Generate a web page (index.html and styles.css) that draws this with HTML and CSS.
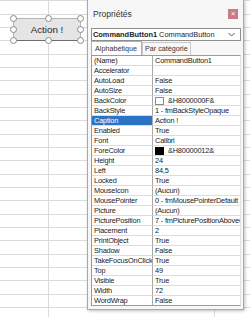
FILE: index.html
```html
<!DOCTYPE html>
<html lang="fr">
<head>
  <meta charset="UTF-8" />
  <meta name="viewport" content="width=device-width, initial-scale=1.0" />
  <title>Propriétés</title>
  <link rel="stylesheet" href="styles.css">
</head>
<body>
  <div class="sheet">
    <div class="cmd-button">
      <span class="cmd-label">Action !</span>
      <span class="handle h-tl"></span>
      <span class="handle h-tm"></span>
      <span class="handle h-tr"></span>
      <span class="handle h-ml"></span>
      <span class="handle h-mr"></span>
      <span class="handle h-bl"></span>
      <span class="handle h-bm"></span>
      <span class="handle h-br"></span>
    </div>

    <div class="props">
      <div class="props-title">
        <span>Propriétés</span>
        <span class="close">×</span>
      </div>
      <div class="combo">
        <span><b>CommandButton1</b> CommandButton</span>
        <svg class="chev" width="7" height="5" viewBox="0 0 7 5"><path d="M0.5 1 L3.5 4 L6.5 1" fill="none" stroke="#555" stroke-width="1"/></svg>
      </div>
      <div class="tabs">
        <span class="tab active">Alphabétique</span>
        <span class="tab">Par catégorie</span>
      </div>
      <div class="grid">
        <div class="k">(Name)</div><div class="v">CommandButton1</div>
        <div class="k">Accelerator</div><div class="v"></div>
        <div class="k">AutoLoad</div><div class="v">False</div>
        <div class="k">AutoSize</div><div class="v">False</div>
        <div class="k">BackColor</div><div class="v"><i class="swatch"></i>&amp;H8000000F&amp;</div>
        <div class="k">BackStyle</div><div class="v">1 - fmBackStyleOpaque</div>
        <div class="k sel">Caption</div><div class="v">Action !</div>
        <div class="k">Enabled</div><div class="v">True</div>
        <div class="k">Font</div><div class="v">Calibri</div>
        <div class="k">ForeColor</div><div class="v"><i class="swatch dark"></i>&amp;H80000012&amp;</div>
        <div class="k">Height</div><div class="v">24</div>
        <div class="k">Left</div><div class="v">84,5</div>
        <div class="k">Locked</div><div class="v">True</div>
        <div class="k">MouseIcon</div><div class="v">(Aucun)</div>
        <div class="k">MousePointer</div><div class="v">0 - fmMousePointerDefault</div>
        <div class="k">Picture</div><div class="v">(Aucun)</div>
        <div class="k">PicturePosition</div><div class="v">7 - fmPicturePositionAboveCenter</div>
        <div class="k">Placement</div><div class="v">2</div>
        <div class="k">PrintObject</div><div class="v">True</div>
        <div class="k">Shadow</div><div class="v">False</div>
        <div class="k">TakeFocusOnClick</div><div class="v">True</div>
        <div class="k">Top</div><div class="v">49</div>
        <div class="k">Visible</div><div class="v">True</div>
        <div class="k">Width</div><div class="v">72</div>
        <div class="k">WordWrap</div><div class="v">False</div>
      </div>
    </div>
  </div>
</body>
</html>
```

FILE: styles.css
```css
body {
  margin: 0;
  font-family: "Liberation Sans", Arial, sans-serif;
  color: #222;
}
.sheet {
  position: relative;
  width: 250px;
  height: 317px;
  overflow: hidden;
  background-color: #fff;
  background-image:
    linear-gradient(to right, transparent 48px, #dadada 48px, #dadada 49px, transparent 49px),
    linear-gradient(to right, transparent 214px, #dadada 214px, #dadada 215px, transparent 215px),
    repeating-linear-gradient(to bottom, transparent 0, transparent 0.33px, #dadada 0.33px, #dadada 1.33px, transparent 1.33px, transparent 13.33px);
}

/* ActiveX button on the sheet */
.cmd-button {
  position: absolute;
  left: 13px;
  top: 18px;
  width: 68px;
  height: 23px;
  box-sizing: border-box;
  background: #e5e5e5;
  border: 1px solid #b4b4b4;
  border-bottom-color: #6e6e6e;
  display: flex;
  align-items: center;
  justify-content: center;
}
.cmd-label {
  font-size: 9.8px;
  color: #262626;
}
.handle {
  position: absolute;
  width: 5px;
  height: 5px;
  border: 1px solid #8c8c8c;
  border-radius: 50%;
  background: #fff;
}
.h-tl, .h-ml, .h-bl { left: -4px; }
.h-tm, .h-bm { left: 31px; }
.h-tr, .h-mr, .h-br { right: -4px; }
.h-tl, .h-tm, .h-tr { top: -4px; }
.h-ml, .h-mr { top: 7px; }
.h-bl, .h-bm, .h-br { bottom: -4px; }

/* properties window */
.props {
  position: absolute;
  left: 87px;
  top: 0;
  width: 157px;
  height: 310px;
  box-sizing: border-box;
  background: #f7f7f7;
  border: 1px solid #a9a9a9;
  border-top: 0;
  box-shadow: 1px 1px 3px rgba(0, 0, 0, 0.25);
  display: flex;
  flex-direction: column;
  padding: 0 2px 3px 3px;
}
.props-title {
  height: 28px;
  display: flex;
  align-items: center;
  justify-content: space-between;
  padding: 1px 3px 1px 2px;
  box-sizing: border-box;
  font-size: 8.5px;
  color: #333;
}
.close {
  width: 10px;
  height: 10px;
  background: #c77b8b;
  color: #fff;
  font-size: 8px;
  line-height: 10px;
  text-align: center;
}
.combo {
  height: 11px;
  display: flex;
  align-items: center;
  justify-content: space-between;
  background: #fff;
  border: 1px solid #8f8f8f;
  padding: 0 5px 0 1px;
  font-size: 7.4px;
  white-space: nowrap;
}
.chev {
  flex: none;
}
.tabs {
  display: flex;
  align-items: flex-end;
  height: 13px;
  margin-top: 1px;
  font-size: 7.2px;
}
.tab {
  padding: 1px 2px 2px;
  border: 1px solid #c8c8c8;
  border-bottom: 0;
  color: #333;
}
.tab.active {
  background: #fff;
  padding: 2px 4px 2px 3px;
  border-color: #b0b0b0;
}
.grid {
  flex: 1;
  display: grid;
  grid-template-columns: 61px 1fr;
  grid-auto-rows: 10px;
  align-content: start;
  background: #fff;
  border: 1px solid #9a9a9a;
  border-right-color: #e0e0e0;
  font-size: 7.4px;
  letter-spacing: -0.2px;
  overflow: hidden;
}
.k, .v {
  box-sizing: border-box;
  border-bottom: 1px solid #dcdcdc;
  padding-left: 2px;
  line-height: 9px;
  white-space: nowrap;
  overflow: hidden;
  display: flex;
  align-items: center;
}
.k {
  border-right: 1px solid #a8a8a8;
}
.k.sel {
  background: #2b73c6;
  color: #fff;
}
.swatch {
  width: 7px;
  height: 6px;
  border: 1px solid #8a8a8a;
  background: #fff;
  margin-right: 4px;
  flex: none;
}
.swatch.dark {
  background: #000;
  border-color: #000;
}
```
